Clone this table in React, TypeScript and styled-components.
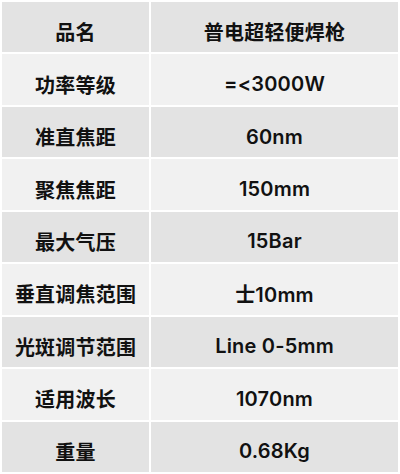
import React, {FC} from 'react';
import styled, {createGlobalStyle} from "styled-components";

const rows: [string, string][] = [
    ['品名', '普电超轻便焊枪'],
    ['功率等级', '=<3000W'],
    ['准直焦距', '60nm'],
    ['聚焦焦距', '150mm'],
    ['最大气压', '15Bar'],
    ['垂直调焦范围', '士10mm'],
    ['光斑调节范围', 'Line 0-5mm'],
    ['适用波长', '1070nm'],
    ['重量', '0.68Kg'],
]

const App: FC = () => {
    return (
        <>
            <GlobalStyle/>
            <SpecTable>
                {rows.map(([name, value], i) => (
                    <React.Fragment key={name}>
                        <Cell $dark={i % 2 === 0}>{name}</Cell>
                        <Cell $dark={i % 2 === 0}>{value}</Cell>
                    </React.Fragment>
                ))}
            </SpecTable>
        </>
    );
};

const GlobalStyle = createGlobalStyle`
  body {
    margin: 0;
    background: #fff;
  }
`

const SpecTable = styled.div`
  display: grid;
  grid-template-columns: 147px 1fr;
  grid-template-rows: repeat(9, 1fr);
  gap: 2px;
  padding: 2px;
  width: 400px;
  height: 474px;
  box-sizing: border-box;
  background: #fff;
`

const Cell = styled.div<{ $dark: boolean }>`
  display: flex;
  align-items: center;
  justify-content: center;
  padding-top: 9px;
  box-sizing: border-box;
  background-color: ${p => p.$dark ? '#e3e3e3' : '#f1f1f1'};
  color: #111;
  font-family: 'Inter', 'Noto Sans CJK SC', sans-serif;
  font-weight: 600;
  font-size: 20px;
  letter-spacing: 0.2px;
`

export default App;
